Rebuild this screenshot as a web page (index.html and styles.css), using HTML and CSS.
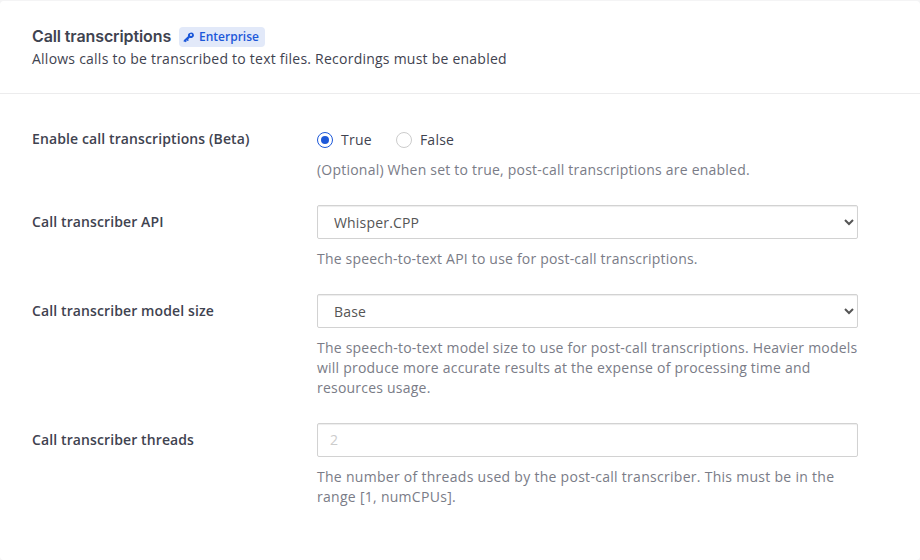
FILE: index.html
```html
<!DOCTYPE html>
<html lang="en">
<head>
<meta charset="utf-8">
<title>Call transcriptions</title>
<link rel="stylesheet" href="styles.css">
</head>
<body>
<section class="panel">
  <header class="panel-header">
    <div class="title-row">
      <h2 class="title">Call transcriptions</h2>
      <span class="badge"><svg class="key" viewBox="0 0 24 24"><path fill-rule="evenodd" d="M22 8a6 6 0 0 1-8.500 5.500L10.500 16.500l1 2.500-2.500 1-1.500-1.500-1 1 .5 2-2 .8-1-1.300L1.500 22v-3.500L10 10.500A6 6 0 1 1 22 8zM18.200 8a2.200 2.200 0 1 0-4.400 0 2.200 2.200 0 0 0 4.400 0z"/></svg>Enterprise</span>
    </div>
    <p class="subtitle">Allows calls to be transcribed to text files. Recordings must be enabled</p>
  </header>
  <form class="settings">
    <div class="row">
      <span class="label">Enable call transcriptions (Beta)</span>
      <div class="field">
        <div class="radios">
          <label class="radio"><input type="radio" name="enable" checked>True</label>
          <label class="radio"><input type="radio" name="enable">False</label>
        </div>
        <p class="help">(Optional) When set to true, post-call transcriptions are enabled.</p>
      </div>
    </div>
    <div class="row">
      <label class="label" for="api">Call transcriber API</label>
      <div class="field">
        <select class="control" id="api"><option>Whisper.CPP</option></select>
        <p class="help help-api">The speech-to-text API to use for post-call transcriptions.</p>
      </div>
    </div>
    <div class="row">
      <label class="label" for="model">Call transcriber model size</label>
      <div class="field">
        <select class="control" id="model"><option>Base</option></select>
        <p class="help">The speech-to-text model size to use for post-call transcriptions. Heavier models will produce more accurate results at the expense of processing time and resources usage.</p>
      </div>
    </div>
    <div class="row">
      <label class="label" for="threads">Call transcriber threads</label>
      <div class="field">
        <input class="control control-text" id="threads" type="text" placeholder="2">
        <p class="help help-threads">The number of threads used by the post-call transcriber. This must be in the range [1, numCPUs].</p>
      </div>
    </div>
  </form>
</section>
</body>
</html>
```
FILE: styles.css
```css
* { box-sizing: border-box; }
html { background: #f4f4f5; }
body { margin: 0; color: #3f4350; font: 14px/20px "Open Sans", sans-serif; }
.panel { height: 559px; margin-top: 1px; border-radius: 4px; background: #fff; overflow: hidden; }
.panel-header { height: 93px; padding: 25px 32px 0; border-bottom: 1px solid #ececed; }
.title-row { display: flex; align-items: center; gap: 8px; height: 22px; }
.title { width: 139px; margin: 0; padding-bottom: 2px; font: 600 16px/20px Metropolis, Inter, sans-serif; letter-spacing: -0.11px; white-space: nowrap; }
.badge { display: flex; align-items: center; gap: 4px; width: 86px; height: 20px; padding-left: 4px; border-radius: 4px; background: #e2e9f9; color: #1c58d9; font-size: 12px; font-weight: 600; }
.key { width: 12px; height: 12px; fill: currentColor; }
.subtitle { margin: 1px 0 0; letter-spacing: 0.235px; }
.settings { padding: 32px 62px 0 32px; }
.row { display: grid; grid-template-columns: 285px 541px; margin-bottom: 25px; }
.label { padding-top: 7px; font-weight: 600; letter-spacing: 0.11px; }
.row:first-child .label { padding-top: 3px; }
.radios { display: flex; gap: 24px; height: 24px; padding-top: 4px; }
.radio { display: flex; align-items: center; gap: 8px; letter-spacing: 0.25px; }
.radio input { display: grid; place-content: center; width: 16px; height: 16px; margin: 0; border: 1px solid #ccc; border-radius: 50%; background: #fff; appearance: none; }
.radio input:checked { border-color: #1c58d9; }
.radio input:checked::before { content: ""; width: 8px; height: 8px; border-radius: 50%; background: #1c58d9; }
.control { display: block; width: 541px; height: 34px; padding: 6px 12px; border: 1px solid #d2d2d2; border-radius: 2px; background: #fff; box-shadow: inset 0 1px 1px rgba(0, 0, 0, 0.075); color: #555; font: 14px/20px "Open Sans", sans-serif; letter-spacing: 0.18px; }
.control-text { padding: 5px 12px 7px; }
.control::placeholder { color: #ccc; }
.help { margin: 10px 0 0; color: #7a7c87; letter-spacing: 0.22px; }
.help-api { letter-spacing: 0.2px; }
.help-threads { letter-spacing: 0.285px; }
```
